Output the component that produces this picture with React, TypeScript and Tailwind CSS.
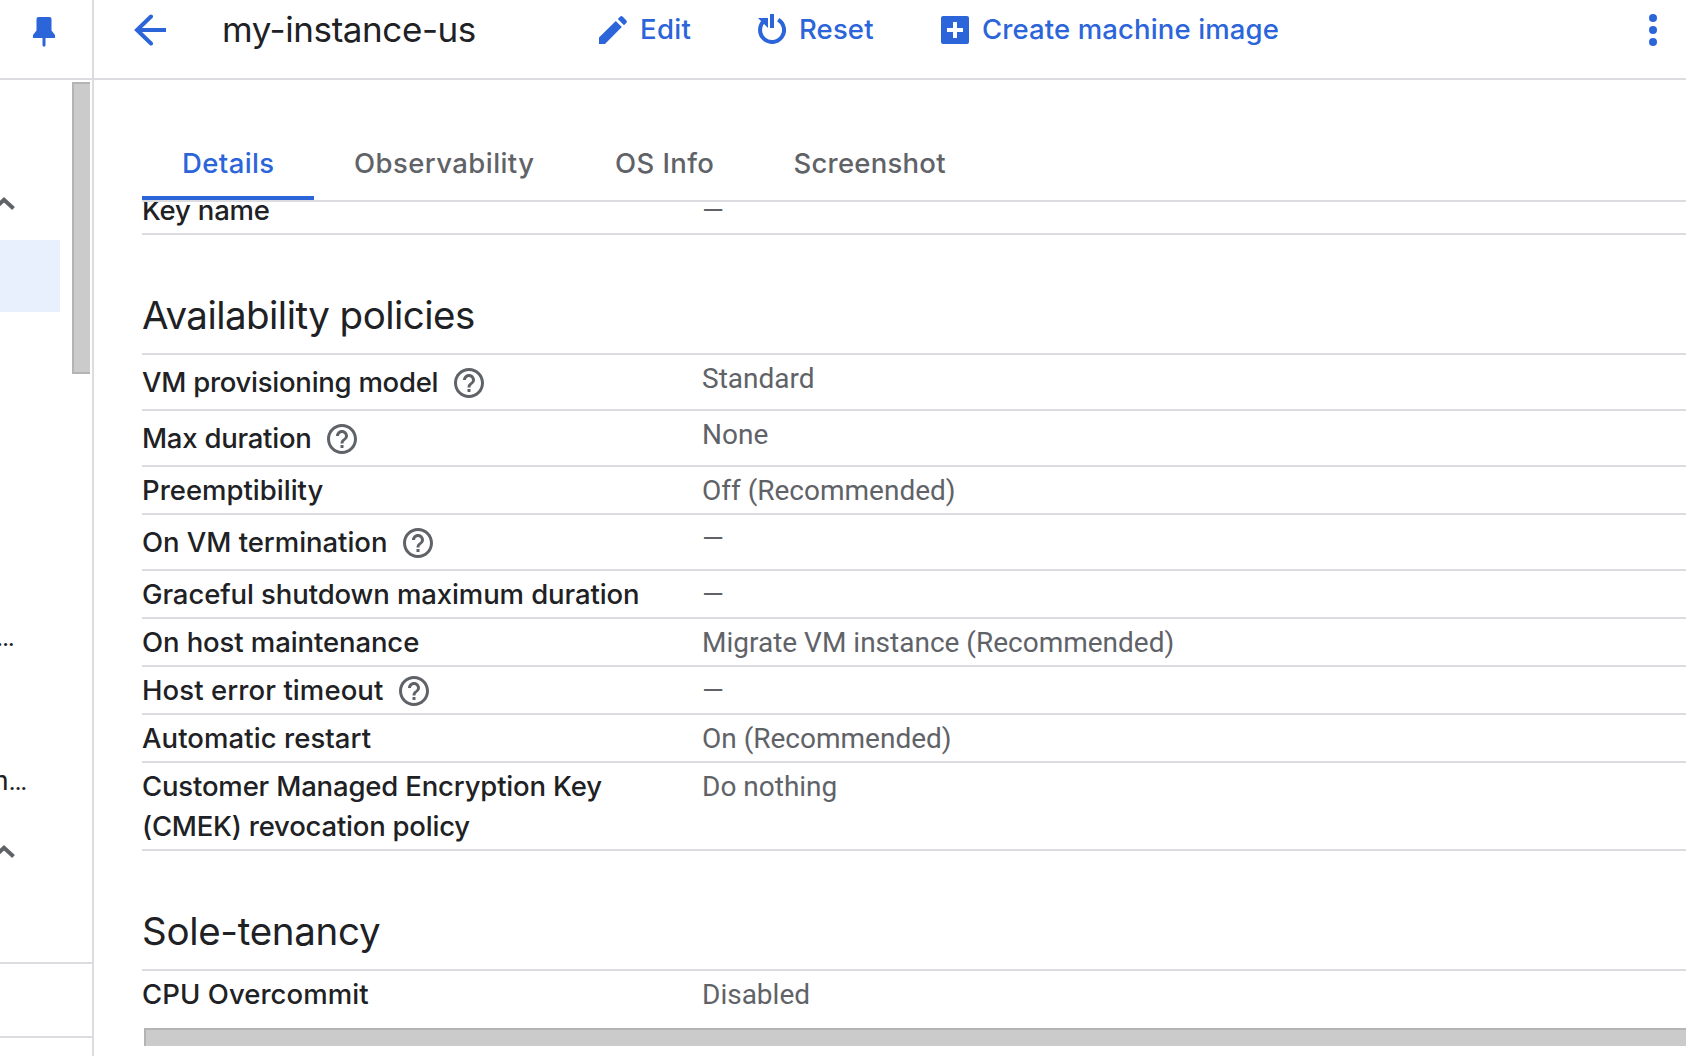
import type { ReactNode } from "react";

type Item = { label: ReactNode; value: string; help?: boolean; height: string };

const policies: Item[] = [
  { label: <span className="tracking-[-0.26px]">VM provisioning model</span>, value: "Standard", help: true, height: "h-14" },
  { label: <span className="tracking-[-0.24px]">Max duration</span>, value: "None", help: true, height: "h-14" },
  { label: <span>Preemptibility</span>, value: "Off (Recommended)", height: "h-12" },
  { label: <span className="tracking-[-0.04px]">On VM termination</span>, value: "—", help: true, height: "h-14" },
  { label: <span className="tracking-[-0.1px]">Graceful shutdown maximum duration</span>, value: "—", height: "h-12" },
  { label: <span className="tracking-[-0.1px]">On host maintenance</span>, value: "Migrate VM instance (Recommended)", height: "h-12" },
  { label: <span className="tracking-[0.09px]">Host error timeout</span>, value: "—", help: true, height: "h-12" },
  { label: <span className="tracking-[0.07px]">Automatic restart</span>, value: "On (Recommended)", height: "h-12" },
  {
    label: (
      <span>
        <span className="block tracking-[-0.17px]">Customer Managed Encryption Key</span>
        <span className="block tracking-[-0.22px]">(CMEK) revocation policy</span>
      </span>
    ),
    value: "Do nothing",
    height: "h-[88px]",
  },
];

function HelpIcon() {
  return (
    <svg viewBox="0 0 24 24" className="ml-[12.5px] mt-[2px] size-9 shrink-0 fill-[#5f6368]">
      <path d="M11 18h2v-2h-2v2zm1-16C6.48 2 2 6.48 2 12s4.48 10 10 10 10-4.48 10-10S17.52 2 12 2zm0 18c-4.41 0-8-3.59-8-8s3.59-8 8-8 8 3.59 8 8-3.59 8-8 8zm0-14c-2.21 0-4 1.79-4 4h2c0-1.1.9-2 2-2s2 .9 2 2c0 2-3 1.75-3 5h2c0-2.25 3-2.5 3-5 0-2.21-1.79-4-4-4z" />
    </svg>
  );
}

function Row({ label, value, help, height }: Item) {
  return (
    <div className={`flex shrink-0 border-b-2 border-[#dadce0] ${height}`}>
      <div className="flex w-[560px] shrink-0 items-center whitespace-nowrap text-[27.5px] font-medium leading-10 text-[#202124]">
        {label}
        {help && <HelpIcon />}
      </div>
      <div className="pt-1 font-[Roboto,sans-serif] text-[28px] leading-10 text-[#5f6368]">{value}</div>
    </div>
  );
}

function Heading({ children }: { children: ReactNode }) {
  return (
    <h2 className="flex h-[120px] shrink-0 items-end border-b-2 border-[#dadce0] pb-[14px] text-[38.5px] leading-[48px] text-[#202124]">
      {children}
    </h2>
  );
}

function Chevron() {
  return (
    <svg viewBox="0 0 24 14" className="-ml-[8px] h-[14px] w-6 fill-none stroke-[#5f6368] stroke-[4]">
      <path d="M2.5 11.5 12 2.8 21.5 11.5" />
    </svg>
  );
}

function Sidebar() {
  return (
    <aside className="flex w-[94px] shrink-0 flex-col border-r-2 border-[#dadce0]">
      <div className="flex h-20 shrink-0 border-b-2 border-[#dadce0] pl-[33px] pt-[17px]">
        <svg viewBox="0 0 22 30" className="h-[30px] w-[22px] fill-[#2b65d9]">
          <path d="M5.500 0h11q2 0 2 2v11.500l3.500 4.500v3H12.500v7.500L11 30 9.500 28.500V21H0v-3l3.500-4.500V2q0-2 2-2z" />
        </svg>
      </div>
      <div className="flex h-[882px] shrink-0">
        <div className="flex w-[72px] shrink-0 flex-col overflow-hidden text-[28px] leading-10 text-[#202124]">
          <div className="h-40 pt-[117px]"><Chevron /></div>
          <div className="h-[72px] w-[60px] bg-[#e8f0fe]" />
          <div className="h-[141px]" />
          <div className="h-[354px] pt-[164px]">
            <div className="-ml-1 font-[Roboto,sans-serif] leading-10">…</div>
            <div className="-ml-[7px] mt-[104px] whitespace-nowrap font-[Roboto,sans-serif]">n…</div>
          </div>
          <div className="pt-[38px]"><Chevron /></div>
        </div>
        <div className="mt-[2px] h-[292px] w-[18px] border-y-2 border-l-2 border-[#b4b4b4] bg-[#cbcbcb]" />
      </div>
      <div className="h-[76px] shrink-0 border-y-2 border-[#dadce0]" />
    </aside>
  );
}

function TopBar() {
  return (
    <header className="flex h-20 shrink-0 items-start border-b-2 border-[#dadce0] text-[27.5px] font-medium leading-10 text-[#2b65d9]">
      <svg viewBox="0 0 32 32" className="ml-10 mt-[14px] size-8 shrink-0 fill-none stroke-[#2b65d9] stroke-[4]">
        <path d="M17 2.500 3 16l14 13.500" strokeLinecap="round" />
        <path d="M3 16h29" />
      </svg>
      <h1 className="ml-14 mt-[9px] w-[377px] text-[35px] font-normal tracking-[-0.42px] text-[#202124]">my-instance-us</h1>
      <div className="mt-[9px] flex w-[159px]">
        <svg viewBox="0 0 28 28" className="mt-[7px] size-7 fill-current">
          <path d="M0 21.500 16.800 5l6 6L6 28H0zM18.800 3l2.200-2.200q1.400-1.400 2.800 0l3.400 3.400q1.400 1.400 0 2.800L25 9.200z" />
        </svg>
        <span className="ml-[13px] tracking-[0.36px]">Edit</span>
      </div>
      <div className="mt-[9px] flex w-[183px]">
        <svg viewBox="0 0 28 30" className="mt-[5px] h-[30px] w-7 fill-none stroke-current">
          <path d="M6 7.100A12 12 0 1 0 20.200 5.700" strokeWidth="4" />
          <path d="M0 4h10v10z" fill="currentColor" stroke="none" />
          <path d="M14 0v14" strokeWidth="4" />
        </svg>
        <span className="ml-[13px] tracking-[0.15px]">Reset</span>
      </div>
      <div className="mt-[9px] flex flex-1">
        <svg viewBox="0 0 28 28" className="mt-[7px] size-7">
          <rect width="28" height="28" rx="2" fill="currentColor" />
          <path d="M14 6v16M6 14h16" stroke="white" strokeWidth="4" />
        </svg>
        <span className="ml-[13px] tracking-[0.13px]">Create machine image</span>
      </div>
      <svg viewBox="0 0 8 32" className="mr-[29px] mt-[14px] h-8 w-2 shrink-0 fill-current">
        <circle cx="4" cy="4" r="4" />
        <circle cx="4" cy="16" r="4" />
        <circle cx="4" cy="28" r="4" />
      </svg>
    </header>
  );
}

function Tabs() {
  return (
    <nav className="ml-12 flex h-[122px] shrink-0 items-end border-b-2 border-[#dadce0] text-[27.5px] font-medium leading-[34px] text-[#5f6368]">
      <div className="h-[54px] w-[172px] border-b-4 border-[#2b65d9] pl-10 tracking-[0.38px] text-[#2b65d9]">Details</div>
      <div className="h-[54px] w-[261px] pl-10 tracking-[0.43px]">Observability</div>
      <div className="h-[54px] w-[178.5px] pl-10 tracking-[0.4px]">OS Info</div>
      <div className="h-[54px] pl-10 tracking-[0.23px]">Screenshot</div>
    </nav>
  );
}

export default function App() {
  return (
    <div className="flex h-[1056px] w-[1686px] overflow-hidden bg-white font-[Inter,sans-serif]">
      <Sidebar />
      <main className="flex min-w-0 flex-1 flex-col">
        <TopBar />
        <Tabs />
        <div className="ml-12 flex h-[826px] shrink-0 flex-col overflow-hidden">
          <div className="-mt-[15px] flex shrink-0 flex-col">
            <Row label={<span className="tracking-[-0.2px]">Key name</span>} value="—" height="h-12" />
          </div>
          <Heading><span className="tracking-[-0.54px]">Availability policies</span></Heading>
          {policies.map((item, i) => <Row key={i} {...item} />)}
          <Heading><span className="tracking-[-0.3px]">Sole-tenancy</span></Heading>
          <Row label={<span className="tracking-[0.06px]">CPU Overcommit</span>} value="Disabled" height="h-16 !border-0 [&>div:first-child]:h-[46px]" />
        </div>
        <div className="ml-[50px] h-[18px] shrink-0 border-l-2 border-t-2 border-[#b4b4b4] bg-[#cbcbcb]" />
      </main>
    </div>
  );
}
